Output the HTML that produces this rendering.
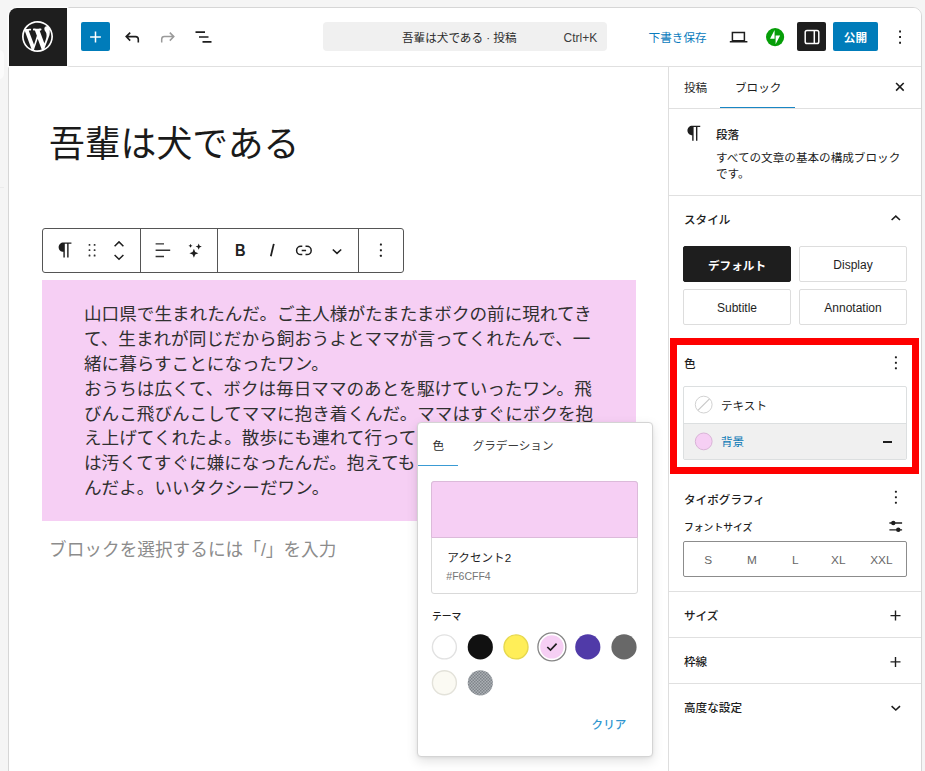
<!DOCTYPE html>
<html lang="ja">
<head>
<meta charset="utf-8">
<title>吾輩は犬である · 投稿</title>
<style>
*{box-sizing:border-box;margin:0;padding:0}
html,body{width:925px;height:771px;overflow:hidden;background:#f5f5f5}
body{font-family:"Liberation Sans","Noto Sans CJK JP",sans-serif;font-size:13px;color:#1e1e1e;position:relative}
.abs{position:absolute}
#frame{position:absolute;left:8px;top:7px;width:914px;height:790px;background:#fff;border:1px solid #d6d6d6;border-radius:9px;overflow:hidden}
/* inside frame coordinates = page coords - (9,8) ; use inner wrapper to restore page coords */
#in{position:absolute;left:-9px;top:-8px;width:925px;height:771px}
#topbar{left:9px;top:8px;width:912px;height:59px;border-bottom:1px solid #e0e0e0;background:#fff}
#wp{left:9px;top:8px;width:58px;height:57.700px;background:#1e1e1e;border-radius:8px 0 0 0;box-shadow:0 0 0 1.300px #fdfdfd}
.t{position:absolute;white-space:nowrap;line-height:1}
.b{font-weight:700}
.hr{position:absolute;height:1px;background:#e0e0e0}
svg{position:absolute;overflow:visible}

.sb{width:108px;height:36.200px;border:1px solid #ddd;border-radius:2px;background:#fff;font-size:12px;line-height:37px;text-align:center;color:#1e1e1e;white-space:nowrap}
.sb.dark{background:#1e1e1e;border-color:#1e1e1e;color:#fff;font-weight:700;font-size:11.600px}
.fs{top:554.800px;font-size:11.800px;color:#666;transform:translateX(-50%)}
.u{font-size:11.600px}
.h{font-size:11.600px;font-weight:500;color:#1e1e1e}
</style>
</head>
<body>
<div class="abs" style="left:-6px;top:50px;width:9.500px;height:29px;border-radius:5px;background:#fbfbfb"></div>
<div class="abs" style="left:0;top:187px;width:4px;height:1px;background:#ebebeb"></div>
<div id="frame"><div id="in">

<!-- ===== top bar ===== -->
<div class="abs" id="topbar"></div>


<div class="abs" style="left:80.500px;top:22px;width:29px;height:29px;background:#007cba;border-radius:2px"></div>
<svg style="left:80px;top:22px" width="30" height="30" viewBox="0 0 30 30"><path d="M15.500 9.600v10.800M10.100 15h10.800" stroke="#fff" stroke-width="1.500" fill="none"/></svg>

<!-- undo -->
<svg style="left:120px;top:24.800px" width="24" height="24" viewBox="0 0 24 24"><path d="M18.3 17.5v-3.2c0-1.5-1.2-2.7-2.7-2.7H6.6M10.2 7.6l-4 4 4 4" stroke="#1e1e1e" stroke-width="1.6" fill="none"/></svg>
<!-- redo -->
<svg style="left:156px;top:24.800px" width="24" height="24" viewBox="0 0 24 24"><path d="M5.7 17.5v-3.2c0-1.5 1.2-2.7 2.7-2.7h9M13.8 7.6l4 4-4 4" stroke="#9a9a9a" stroke-width="1.5" fill="none"/></svg>
<!-- list view -->
<svg style="left:191px;top:25px" width="24" height="24" viewBox="0 0 24 24"><path d="M4.5 7.2h9.5M8 12h9.5M11.5 16.8h9" stroke="#1e1e1e" stroke-width="1.7" fill="none"/></svg>

<!-- command center -->
<div class="abs" style="left:323px;top:22px;width:284px;height:29px;background:#f0f0f0;border-radius:4px"></div>
<div class="t" style="left:402px;top:32.200px;font-size:11.600px;color:#2a2a2a">吾輩は犬である · 投稿</div>
<div class="t" style="left:563.500px;top:32px;font-size:12px;color:#3c3c3c">Ctrl+K</div>

<div class="t" style="left:648.600px;top:32.300px;font-size:11.600px;color:#0a7bbd">下書き保存</div>
<!-- laptop -->
<svg style="left:726px;top:25px" width="24" height="24" viewBox="0 0 24 24"><path d="M6.400 7.500h12v8.300H6.400zM3.800 16.700h17.600" stroke="#1e1e1e" stroke-width="1.500" fill="none"/></svg>
<!-- jetpack -->
<svg style="left:766.200px;top:28.200px" width="18.200" height="18.200" viewBox="0 0 18 18"><circle cx="9" cy="9" r="9" fill="#069e08"/><path d="M8.500 1.900v8.700H4zM9.500 16.100V7.400H14z" fill="#fff"/></svg>
<!-- sidebar toggle -->
<div class="abs" style="left:797px;top:22px;width:29px;height:29px;background:#1e1e1e;border-radius:2px"></div>
<svg style="left:799.500px;top:24.600px" width="24" height="24" viewBox="0 0 24 24"><rect x="5.200" y="5.400" width="13.600" height="13.200" rx="1.800" stroke="#fff" stroke-width="1.500" fill="none"/><path d="M14.300 5.500v13" stroke="#fff" stroke-width="1.500"/></svg>
<!-- publish -->
<div class="abs" style="left:833px;top:22px;width:45.200px;height:29px;background:#007cba;border-radius:2px"></div>
<div class="t b" style="left:843.800px;top:32.200px;font-size:11.600px;color:#fff">公開</div>
<!-- dots -->
<svg style="left:888px;top:25px" width="24" height="24" viewBox="0 0 24 24"><path d="M11.100 5.500h1.900v1.900h-1.900zM11.100 11.100h1.900v1.900h-1.900zM11.100 16.800h1.900v1.900h-1.900z" fill="#1e1e1e"/></svg>


<!-- ===== editor canvas ===== -->
<div class="t" id="title" style="left:49px;top:125px;font-size:35.8px;font-weight:400;line-height:40px;color:#1a1a1a">吾輩は犬である</div>

<!-- block toolbar -->
<div class="abs" style="left:42px;top:227.500px;width:361.800px;height:45.300px;border:1.600px solid #555;border-radius:3px;background:#fff"></div>
<div class="abs" style="left:139.700px;top:228px;width:1.600px;height:44px;background:#555"></div>
<div class="abs" style="left:216.600px;top:228px;width:1.600px;height:44px;background:#555"></div>
<div class="abs" style="left:357.800px;top:228px;width:1.600px;height:44px;background:#555"></div>
<div class="t b" style="left:235px;top:241.500px;font-size:17.200px;font-family:'Liberation Sans',sans-serif;color:#222;transform:scaleX(.850);transform-origin:left center">B</div>
<svg style="left:0;top:0" width="925" height="771" viewBox="0 0 925 771">
 <!-- paragraph icon -->
 <g transform="translate(53.900,238.600) scale(1.030)"><path fill="#1e1e1e" d="M9.996 14v-.225l.004 0V20h1.500V5.500H14V20h1.500V5.500h3V4H9.996c-2.761 0-5 2.239-5 5s2.239 5 5 5z" transform="scale(.92)"/></g>
 <!-- drag handle -->
 <g fill="#333"><rect x="88.600" y="243.900" width="1.800" height="1.800" rx=".5"/><rect x="93.700" y="243.900" width="1.800" height="1.800" rx=".5"/><rect x="88.600" y="249.300" width="1.800" height="1.800" rx=".5"/><rect x="93.700" y="249.300" width="1.800" height="1.800" rx=".5"/><rect x="88.600" y="254.600" width="1.800" height="1.800" rx=".5"/><rect x="93.700" y="254.600" width="1.800" height="1.800" rx=".5"/></g>
 <!-- movers -->
 <path d="M114.600 246.200L119 241.900l4.400 4.300M114.600 255l4.400 4.300 4.400-4.300" stroke="#1e1e1e" stroke-width="1.500" fill="none"/>
 <!-- align -->
 <path d="M155.600 243.900h8.400M155.600 250.200h14.600M155.600 256.500h8.400" stroke="#333" stroke-width="1.400" fill="none"/>
 <!-- sparkles -->
 <g fill="#1e1e1e">
  <path d="M193.900 248.700l1.300 3.200 3.200 1.300-3.200 1.300-1.300 3.200-1.300-3.200-3.200-1.300 3.200-1.300z"/>
  <path d="M198.700 243.500l.9 2.200 2.200.9-2.200.9-.9 2.200-.9-2.200-2.200-.9 2.200-.9z"/>
  <path d="M190.500 243.800l.6 1.400 1.400.6-1.400.6-.6 1.400-.6-1.400-1.400-.6 1.400-.6z"/>
 </g>
 <!-- italic -->
 <path d="M273.800 243.900L270.800 256.300" stroke="#1e1e1e" stroke-width="1.800" fill="none"/>
 <!-- link -->
 <path d="M302.300 254.600h-1.500a4.200 4.200 0 010-8.400h1.500M305.500 246.200h1.500a4.200 4.200 0 010 8.400h-1.500M301.700 250.400h4.400" stroke="#1e1e1e" stroke-width="1.500" fill="none"/>
 <!-- chevron -->
 <path d="M332.800 249.500l4.200 3.800 4.200-3.800" stroke="#1e1e1e" stroke-width="1.600" fill="none"/>
 <!-- dots -->
 <g fill="#1e1e1e"><rect x="379.900" y="243.600" width="2" height="2" rx=".5"/><rect x="379.900" y="249.200" width="2" height="2" rx=".5"/><rect x="379.900" y="254.700" width="2" height="2" rx=".5"/></g>
</svg>

<!-- paragraph -->
<div class="abs" style="left:42px;top:280px;width:594px;height:241px;background:#f6cff4"></div>
<div class="abs" id="para" style="left:84px;top:301.900px;width:520px;font-size:17.600px;line-height:24.900px;color:#303030;font-weight:400;word-break:break-all">山口県で生まれたんだ。ご主人様がたまたまボクの前に現れてき<br>て、生まれが同じだから飼おうよとママが言ってくれたんで、一<br>緒に暮らすことになったワン。<br>おうちは広くて、ボクは毎日ママのあとを駆けていったワン。飛<br>びんこ飛びんこしてママに抱き着くんだ。ママはすぐにボクを抱<br>え上げてくれたよ。散歩にも連れて行ってくれたけど、ボクの足<br>は汚くてすぐに嫌になったんだ。抱えてもらうのが一番よかった<br>んだよ。いいタクシーだワン。</div>
<div class="t" style="left:49px;top:542px;font-size:17.670px;color:#8c8c8c;font-weight:400">ブロックを選択するには「/」を入力</div>


<!-- ===== sidebar ===== -->
<div class="abs" style="left:668px;top:67px;width:1px;height:710px;background:#dedede"></div>
<div class="abs" style="left:669px;top:67px;width:252px;height:710px;background:#fff"></div>
<!-- tabs -->
<div class="t u" style="left:684px;top:82px">投稿</div>
<div class="t u" style="left:735px;top:82px">ブロック</div>
<div class="abs" style="left:720px;top:107.400px;width:75px;height:1.400px;background:#1a86c4"></div>
<div class="hr" style="left:669px;top:108px;width:252px"></div>
<!-- block card -->
<div class="t h" style="left:716px;top:128.700px">段落</div>
<div class="abs u" style="left:716px;top:149.700px;width:200px;line-height:15.900px;color:#1e1e1e">すべての文章の基本の構成ブロック<br>です。</div>
<div class="hr" style="left:669px;top:195px;width:252px"></div>
<!-- styles -->
<div class="t h" style="left:684px;top:213.600px">スタイル</div>
<div class="abs sb dark" style="left:683px;top:245.800px">デフォルト</div>
<div class="abs sb" style="left:799px;top:245.800px">Display</div>
<div class="abs sb" style="left:683px;top:289px">Subtitle</div>
<div class="abs sb" style="left:799px;top:289px">Annotation</div>
<!-- red highlight -->
<div class="abs" style="left:670px;top:338px;width:249px;height:135.700px;border:7.800px solid #fe0000;z-index:5"></div>
<!-- colour -->
<div class="t h" style="left:684px;top:357.800px">色</div>
<div class="abs" style="left:683px;top:385.500px;width:224px;height:74.500px;border:1px solid #dcdfe0;border-radius:2px;background:#fff"></div>
<div class="abs" style="left:684px;top:422.500px;width:222px;height:36.500px;background:#f0f0f0;border-top:1px solid #dcdfe0"></div>
<div class="t u" style="left:721px;top:399.500px">テキスト</div>
<div class="t u" style="left:721px;top:436.400px;color:#0a78b5">背景</div>
<div class="abs" style="left:883.300px;top:441px;width:9.200px;height:1.500px;background:#1e1e1e"></div>
<!-- typography -->
<div class="t h" style="left:684px;top:493.600px">タイポグラフィ</div>
<div class="t h" style="left:684px;top:523.300px;font-size:9.800px">フォントサイズ</div>
<div class="abs" style="left:683px;top:541.200px;width:224px;height:35.600px;border:1px solid #8c8c8c;border-radius:2px;background:#fff"></div>
<div class="t fs" style="left:708.300px">S</div>
<div class="t fs" style="left:752px">M</div>
<div class="t fs" style="left:795.200px">L</div>
<div class="t fs" style="left:838.300px">XL</div>
<div class="t fs" style="left:881.400px">XXL</div>
<div class="hr" style="left:669px;top:591px;width:252px"></div>
<div class="t h" style="left:684px;top:610px">サイズ</div>
<div class="hr" style="left:669px;top:637px;width:252px"></div>
<div class="t h" style="left:684px;top:656.400px">枠線</div>
<div class="hr" style="left:669px;top:683px;width:252px"></div>
<div class="t h" style="left:684px;top:702.200px">高度な設定</div>
<!-- sidebar icons (page coordinates) -->
<svg style="left:0;top:0" width="925" height="771" viewBox="0 0 925 771">
 <path d="M896.100 83l7.600 7.600M903.700 83l-7.600 7.600" stroke="#1e1e1e" stroke-width="1.600" fill="none"/>
 <g transform="translate(682.700,121.900) scale(.948)"><path fill="#1e1e1e" d="M9.996 14v-.225l.004 0V20h1.500V5.500H14V20h1.500V5.500h3V4H9.996c-2.761 0-5 2.239-5 5s2.239 5 5 5z"/></g>
 <path d="M891.600 220l4.200-3.800 4.200 3.800" stroke="#1e1e1e" stroke-width="1.600" fill="none"/>
 <g fill="#1e1e1e"><rect x="894.9" y="356.3" width="2" height="2" rx=".6"/><rect x="894.9" y="361.8" width="2" height="2" rx=".6"/><rect x="894.9" y="367.3" width="2" height="2" rx=".6"/></g>
 <circle cx="703.700" cy="404.600" r="8.400" fill="#fff" stroke="#d2d2d2" stroke-width="1"/><path d="M697.900 410.400L709.500 398.800" stroke="#c8c8c8" stroke-width="1.200"/>
 <circle cx="703.700" cy="441.400" r="8.400" fill="#f6cff4" stroke="#d9b4d7" stroke-width="1"/>
 <g fill="#1e1e1e"><rect x="894.9" y="490.7" width="2" height="2" rx=".6"/><rect x="894.9" y="496.2" width="2" height="2" rx=".6"/><rect x="894.9" y="501.7" width="2" height="2" rx=".6"/></g>
 <path d="M889.400 523h12.700M889.400 529.800h12.700" stroke="#1e1e1e" stroke-width="1.300" fill="none"/><circle cx="893.300" cy="523" r="2.200" fill="#1e1e1e"/><circle cx="898.300" cy="529.800" r="2.200" fill="#1e1e1e"/>
 <path d="M895.500 610.600v10M890.500 615.600h10M895.500 656.900v10M890.500 661.900h10" stroke="#1e1e1e" stroke-width="1.400" fill="none"/>
 <path d="M891.600 706.200l4.200 3.800 4.200-3.800" stroke="#1e1e1e" stroke-width="1.600" fill="none"/>
</svg>
<!-- ===== colour popover ===== -->
<div class="abs" style="left:416.600px;top:422px;width:236.400px;height:334.800px;background:#fff;border:1px solid #d4d4d4;border-radius:4px;box-shadow:0 4px 12px rgba(0,0,0,.12),0 1px 3px rgba(0,0,0,.06);z-index:10"></div>
<div class="abs" id="pop" style="left:0;top:0;width:925px;height:771px;z-index:11">
<div class="t u" style="left:432.600px;top:440.300px;color:#2a2a2a">色</div>
<div class="t u" style="left:472.600px;top:440.300px;color:#3a3a3a">グラデーション</div>
<div class="abs" style="left:417.600px;top:464.600px;width:40px;height:1.400px;background:#3a9bd4"></div>
<div class="abs" style="left:431.300px;top:480.800px;width:206.900px;height:113.200px;border:1px solid #d9d9d9;border-radius:3px;background:#fff"></div>
<div class="abs" style="left:431.300px;top:480.800px;width:206.900px;height:57.600px;border:1px solid #dcbada;border-radius:3px 3px 0 0;background:#f6cff4"></div>
<div class="t u" style="left:447.300px;top:551.900px;color:#1e1e1e">アクセント2</div>
<div class="t" style="left:446.300px;top:571.200px;font-size:10.500px;color:#757575">#F6CFF4</div>
<div class="t h" style="left:432px;top:611.600px;font-size:9.800px">テーマ</div>
<svg style="left:417px;top:622px" width="235" height="90" viewBox="417 622 235 90">
  <defs><pattern id="chk" width="3" height="3" patternUnits="userSpaceOnUse"><rect width="3" height="3" fill="#acb0b5"/><rect width="1.500" height="1.500" fill="#7f848a"/><rect x="1.500" y="1.500" width="1.500" height="1.500" fill="#7f848a"/></pattern></defs>
  <circle cx="444.400" cy="646.900" r="12" fill="#fff" stroke="#e2e2e2" stroke-width="1.400"/>
  <circle cx="480.300" cy="646.900" r="12.600" fill="#111"/>
  <circle cx="516" cy="646.900" r="12" fill="#ffee58" stroke="#e6d84e" stroke-width="1.400"/>
  <circle cx="551.900" cy="646.900" r="14" fill="#fff" stroke="#858585" stroke-width="1.300"/>
  <circle cx="551.900" cy="646.900" r="11.700" fill="#f6cff4"/>
  <path d="M547.300 647l3.200 3.100 6.100-6.400" stroke="#1e1e1e" stroke-width="1.700" fill="none"/>
  <circle cx="587.800" cy="646.900" r="12.600" fill="#503aa8"/>
  <circle cx="624" cy="646.900" r="12.600" fill="#686868"/>
  <circle cx="444.400" cy="682.800" r="12" fill="#fbfaf3" stroke="#e3e2da" stroke-width="1.400"/>
  <circle cx="480.300" cy="682.800" r="12.600" fill="url(#chk)"/>
</svg>
<div class="t u" style="left:591.600px;top:718.500px;color:#2f96d0;font-weight:500">クリア</div>
</div>

</div></div>
<!-- site icon (drawn above the frame so its light halo covers the frame edge) -->
<div class="abs" id="wp"></div>
<svg style="left:22px;top:21px" width="31" height="31" viewBox="0 0 20 20"><path fill="#fff" d="M20 10c0-5.510-4.490-10-10-10C4.480 0 0 4.490 0 10c0 5.520 4.480 10 10 10 5.510 0 10-4.480 10-10zM7.780 15.370L4.370 6.220c.550-.020 1.170-.080 1.170-.080.500-.060.440-1.130-.060-1.110 0 0-1.450.110-2.370.110-.180 0-.370 0-.580-.010C4.120 2.690 6.870 1.110 10 1.110c2.330 0 4.450.870 6.050 2.340-.680-.110-1.650.390-1.650 1.580 0 .740.450 1.360.900 2.100.350.610.550 1.360.550 2.460 0 1.490-1.400 5-1.400 5l-3.030-8.370c.540-.020.820-.170.820-.170.500-.050.440-1.250-.060-1.220 0 0-1.440.120-2.380.120-.870 0-2.330-.120-2.330-.120-.500-.030-.560 1.200-.060 1.220l.920.080 1.260 3.410zM17.410 10c.240-.640.740-1.870.430-4.250.700 1.290 1.050 2.710 1.050 4.250 0 3.290-1.730 6.240-4.400 7.780.970-2.590 1.940-5.200 2.920-7.780zM6.100 18.090C3.120 16.650 1.110 13.530 1.110 10c0-1.300.230-2.480.720-3.590C3.250 10.300 4.670 14.200 6.100 18.090zm4.030-6.630l2.580 6.980c-.860.290-1.760.450-2.710.450-.790 0-1.570-.110-2.290-.330.810-2.380 1.620-4.740 2.420-7.100z"/></svg>
</body>
</html>
